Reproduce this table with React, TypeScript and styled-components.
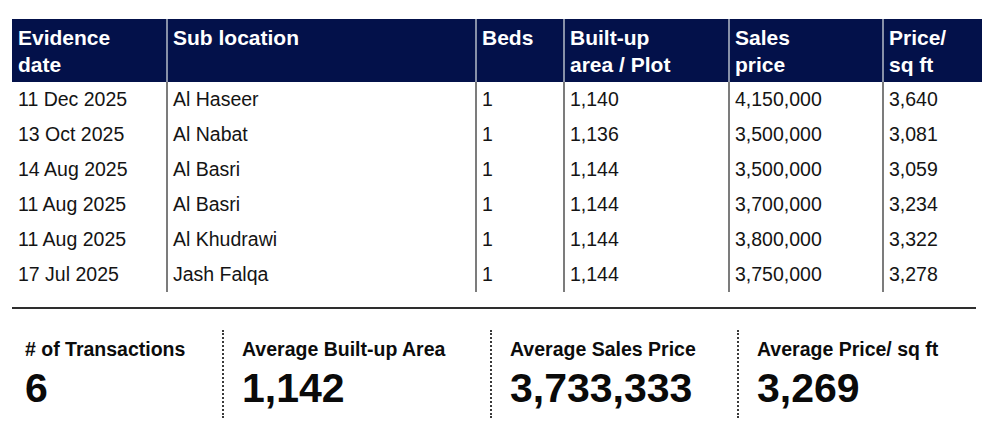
import React from "react";
import styled, { createGlobalStyle } from "styled-components";

const Global = createGlobalStyle`
  html, body { margin: 0; padding: 0; background: #ffffff; }
  body { font-family: "Liberation Sans", Arial, Helvetica, sans-serif; color: #111111; }
`;

const Page = styled.div`
  width: 997px;
  height: 442px;
  box-sizing: border-box;
  padding: 19px 0 0 12px;
  overflow: hidden;
`;

const COLS = "154px 309px 88px 165px 154px 100px";

const Table = styled.div`
  width: 970px;
  display: grid;
  grid-template-columns: ${COLS};
`;

const HeadCell = styled.div<{ $first?: boolean }>`
  background: #03114a;
  color: #ffffff;
  font-weight: 700;
  font-size: 21px;
  line-height: 27px;
  height: 63px;
  box-sizing: border-box;
  padding: 5px 4px 4px ${(p) => (p.$first ? "6px" : "5px")};
  border-left: ${(p) => (p.$first ? "none" : "2px solid #8790a8")};
`;

const Cell = styled.div<{ $first?: boolean }>`
  font-size: 19.5px;
  line-height: 35px;
  height: 35px;
  box-sizing: border-box;
  padding: 0 4px 0 ${(p) => (p.$first ? "6px" : "5px")};
  border-left: ${(p) => (p.$first ? "none" : "2px solid #7c7c7c")};
  white-space: nowrap;
  color: #141414;
`;

const Rule = styled.div`
  width: 964px;
  height: 2px;
  background: #2e2e2e;
  margin-top: 15px;
`;

const Summary = styled.div`
  display: grid;
  grid-template-columns: 210px 268px 247px 1fr;
  margin-top: 21px;
  width: 970px;
`;

const Stat = styled.div<{ $first?: boolean }>`
  height: 88px;
  box-sizing: border-box;
  padding: 8px 0 0 ${(p) => (p.$first ? "13px" : "18px")};
  border-left: ${(p) => (p.$first ? "none" : "2px dotted #3a3a3a")};
`;

const StatLabel = styled.div`
  font-weight: 700;
  font-size: 19.5px;
  line-height: 22px;
  color: #0c0c0c;
  white-space: nowrap;
`;

const StatValue = styled.div`
  font-weight: 700;
  font-size: 41px;
  line-height: 44px;
  margin-top: 6px;
  color: #0a0a0a;
  white-space: nowrap;
`;

const headers = [
  ["Evidence", "date"],
  ["Sub location"],
  ["Beds"],
  ["Built-up", "area / Plot"],
  ["Sales", "price"],
  ["Price/", "sq ft"],
];

const rows = [
  ["11 Dec 2025", "Al Haseer", "1", "1,140", "4,150,000", "3,640"],
  ["13 Oct 2025", "Al Nabat", "1", "1,136", "3,500,000", "3,081"],
  ["14 Aug 2025", "Al Basri", "1", "1,144", "3,500,000", "3,059"],
  ["11 Aug 2025", "Al Basri", "1", "1,144", "3,700,000", "3,234"],
  ["11 Aug 2025", "Al Khudrawi", "1", "1,144", "3,800,000", "3,322"],
  ["17 Jul 2025", "Jash Falqa", "1", "1,144", "3,750,000", "3,278"],
];

const stats = [
  ["# of Transactions", "6"],
  ["Average Built-up Area", "1,142"],
  ["Average Sales Price", "3,733,333"],
  ["Average Price/ sq ft", "3,269"],
];

export default function App() {
  return (
    <>
      <Global />
      <Page>
        <Table>
          {headers.map((h, i) => (
            <HeadCell key={i} $first={i === 0}>
              {h.map((line, j) => (
                <div key={j}>{line}</div>
              ))}
            </HeadCell>
          ))}
          {rows.map((r, ri) =>
            r.map((c, ci) => (
              <Cell key={`${ri}-${ci}`} $first={ci === 0}>
                {c}
              </Cell>
            ))
          )}
        </Table>
        <Rule />
        <Summary>
          {stats.map(([label, value], i) => (
            <Stat key={i} $first={i === 0}>
              <StatLabel>{label}</StatLabel>
              <StatValue>{value}</StatValue>
            </Stat>
          ))}
        </Summary>
      </Page>
    </>
  );
}
